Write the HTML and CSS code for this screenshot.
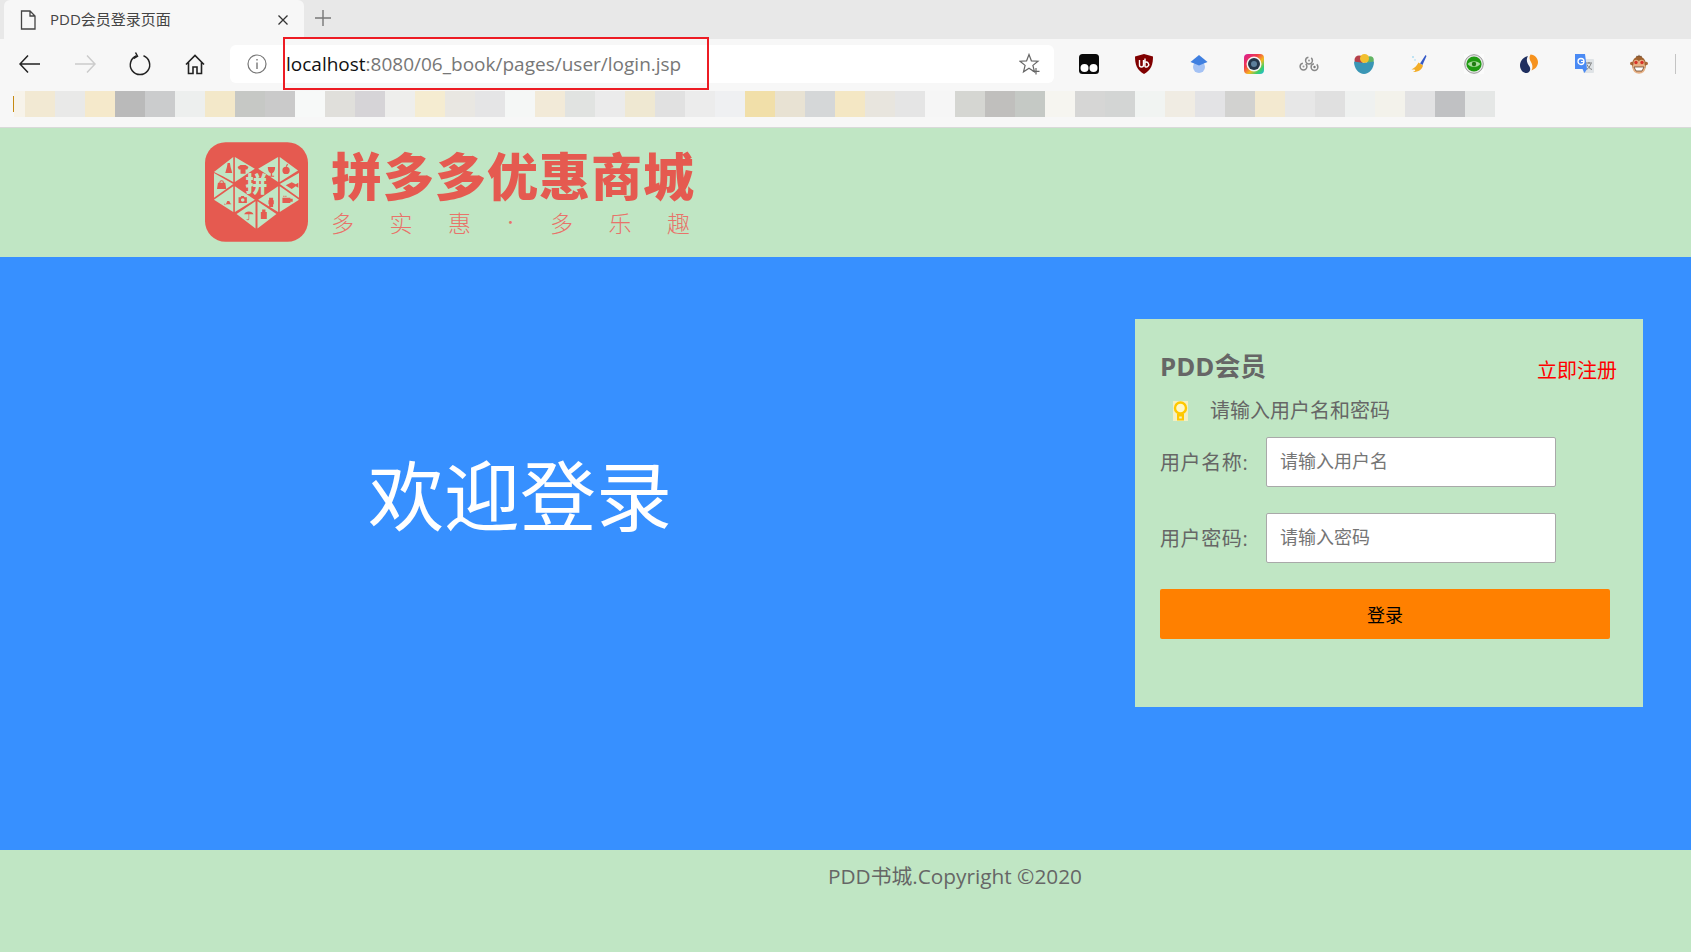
FILE: index.html
```html
<!DOCTYPE html>
<html lang="zh-CN">
<head>
<meta charset="utf-8">
<title>PDD会员登录页面</title>
<link rel="stylesheet" href="styles.css">
</head>
<body>
<div class="browser">
  <div class="tabstrip">
    <div class="tab">
      <svg class="tab-doc" viewBox="0 0 18 20" width="18" height="20"><path d="M2.5 1H11L16 6V19H2.5Z M11 1V6H16" fill="none" stroke="#444" stroke-width="1.3"/></svg>
      <span class="tab-title">PDD会员登录页面</span>
      <svg class="tab-close" viewBox="0 0 12 12" width="12" height="12"><path d="M1.5 1.5L10.5 10.5M10.5 1.5L1.5 10.5" stroke="#333" stroke-width="1.3"/></svg>
    </div>
    <svg class="tab-new" viewBox="0 0 18 18" width="18" height="18"><path d="M9 1V17M1 9H17" stroke="#777" stroke-width="1.4"/></svg>
  </div>
  <div class="toolbar">
    <div class="navrow">
      <div class="btn"><svg viewBox="0 0 22 20" width="22" height="20"><path d="M9 1.5L1 10L9 18.5M1 10H21" fill="none" stroke="#222" stroke-width="1.5"/></svg></div>
      <div class="btn"><svg viewBox="0 0 22 20" width="22" height="20"><path d="M13 1.5L21 10L13 18.5M21 10H1" fill="none" stroke="#ccc" stroke-width="1.5"/></svg></div>
      <div class="btn"><svg viewBox="0 0 24 24" width="24" height="24"><path d="M8.5 3.800A9.700 9.700 0 1 0 15.500 3.800" fill="none" stroke="#222" stroke-width="1.5"/><path d="M7.500 0.500L9.500 4.200L5.500 6.500" fill="none" stroke="#222" stroke-width="1.5"/></svg></div>
      <div class="btn"><svg viewBox="0 0 20 21" width="20" height="21"><path d="M1 10.500L10 1.500L19 10.500M3.500 8.500V19.500H8V13H12V19.500H16.500V8.500" fill="none" stroke="#222" stroke-width="1.6"/></svg></div>
      <div class="address">
        <svg class="info" viewBox="0 0 20 20" width="20" height="20"><circle cx="10" cy="10" r="9" fill="none" stroke="#777" stroke-width="1.2"/><path d="M10 8.500V15M10 5V6.600" stroke="#777" stroke-width="1.4"/></svg>
        <span class="url"><span class="url-host">localhost</span>:8080/06_book/pages/user/login.jsp</span>
        <svg class="star" viewBox="0 0 22 22" width="22" height="22"><path d="M10 1.500L12.400 7.800L19 8.200L13.900 12.400L15.500 18.800L10 15.200L4.500 18.800L6.100 12.400L1 8.200L7.600 7.800Z" fill="none" stroke="#666" stroke-width="1.2"/><path d="M17 15V21.500M13.800 18.300H20.500" stroke="#666" stroke-width="1.2"/></svg>
      </div>
      <div class="extensions">
        <div class="btn"><svg viewBox="0 0 20 20" width="20" height="20"><rect width="20" height="20" rx="3.500" fill="#0a0a0a"/><circle cx="5.500" cy="14" r="4" fill="#fff"/><circle cx="14.500" cy="14" r="4" fill="#fff"/></svg></div>
        <div class="btn"><svg viewBox="0 0 18 20" width="18" height="20"><path d="M9 0L18 2.500C18 11 16 16 9 20C2 16 0 11 0 2.500Z" fill="#800000"/><path d="M4.500 6V11A2 2 0 0 0 8.500 11V6M10 4.500V13M10 8.500A2.400 2.400 0 1 1 10 12.600" fill="none" stroke="#fff" stroke-width="1.4"/></svg></div>
        <div class="btn"><svg viewBox="0 0 18 20" width="18" height="20"><circle cx="9" cy="13" r="6" fill="#a4c2f4"/><path d="M9 1L17.500 8L9 11.500L0.500 8Z" fill="#3f7fe0"/></svg></div>
        <div class="btn"><svg viewBox="0 0 20 20" width="20" height="20"><defs><linearGradient id="ring" x1="0" y1="0" x2="1" y2="1"><stop offset="0" stop-color="#d81b9a"/><stop offset=".35" stop-color="#f03a4a"/><stop offset=".6" stop-color="#f5b81f"/><stop offset=".8" stop-color="#3ccf6a"/><stop offset="1" stop-color="#1fb6e8"/></linearGradient></defs><rect width="20" height="20" rx="4" fill="url(#ring)"/><circle cx="10" cy="10" r="7.500" fill="#f4f4f4"/><circle cx="10" cy="10" r="6" fill="#26364a"/><circle cx="10" cy="10" r="3" fill="#5d7f9c"/></svg></div>
        <div class="btn"><svg viewBox="0 0 20 16" width="20" height="16"><g fill="none" stroke="#888" stroke-width="1.5" stroke-dasharray="15 3"><circle cx="4.500" cy="10.500" r="3.400"/><circle cx="10" cy="4.500" r="3.400"/><circle cx="15.500" cy="11" r="3.400"/></g><circle cx="15.500" cy="11" r="1.200" fill="#777"/><circle cx="10" cy="4.500" r="1" fill="#999"/><circle cx="4.500" cy="10.500" r="1" fill="#999"/></svg></div>
        <div class="btn"><svg viewBox="0 0 20 20" width="20" height="20"><circle cx="5" cy="6" r="4.500" fill="#b5404a"/><circle cx="16" cy="6" r="3.800" fill="#62b463"/><circle cx="10.500" cy="4.500" r="4.500" fill="#f2bf2e"/><path d="M0 7.500L10 9L20 7.500C20 15 15 20 10 20C5 20 0 15 0 7.500Z" fill="#3a96b5"/></svg></div>
        <div class="btn"><svg viewBox="0 0 16 20" width="16" height="20"><rect x="1" y="2" width="2" height="2" fill="#bfe3f2"/><rect x="3" y="5" width="2" height="2" fill="#cfe9f5"/><path d="M14.500 1L9 9.500L11.500 11L15.500 2Z" fill="#3559c7"/><path d="M7.500 8.500L12 11.500C11 15.500 8 18 2 18C5 16.500 5.500 15 0.500 15.500C4 13.500 6 11.500 7.500 8.500Z" fill="#f3ad27"/></svg></div>
        <div class="btn"><svg viewBox="0 0 20 20" width="20" height="20"><rect width="20" height="20" fill="#fbfbfb"/><circle cx="10" cy="10" r="9.300" fill="#e6e6e6" stroke="#999" stroke-width="1"/><circle cx="10" cy="10" r="7.600" fill="#1f9a12"/><path d="M3.600 10C6.500 6.200 13.500 6.200 16.400 10C13.500 13.800 6.500 13.800 3.600 10Z" fill="#a8d99c"/><circle cx="10" cy="10" r="2.200" fill="#1f7a12"/></svg></div>
        <div class="btn"><svg viewBox="0 0 18 20" width="18" height="20"><path d="M8 2C2 3.500 0 8 0 11.500C0 16 3.500 19.500 7 19C10 18.500 11 15 9.500 12.500C7.500 9.500 5.500 6.500 8 2Z" fill="#1f2f5f"/><path d="M10.500 0.500C8.800 3 9.500 5.500 11 8C12.500 10.500 13 13.500 11.500 16.500C15.500 15 18 12 18 8C18 4.500 15 0.800 10.500 0.500Z" fill="#f6921e"/></svg></div>
        <div class="btn"><svg viewBox="0 0 20 20" width="20" height="20"><rect x="9" y="5" width="11" height="14" rx="1" fill="#dfe3e6"/><path d="M12 9H18M15 8V9.500M17 9.500C16 12.500 14.500 14.500 12.500 15.500M13 10.500C14 13 15.500 14.500 18 15.500" fill="none" stroke="#777" stroke-width=".9"/><path d="M1 0H11L13 15H1Z M8.500 15L10.500 19L13 15Z" fill="#4a8af4"/><circle cx="7" cy="7.500" r="3" fill="none" stroke="#fff" stroke-width="1.3"/><path d="M7 7.500H10" stroke="#fff" stroke-width="1.1"/></svg></div>
        <div class="btn"><svg viewBox="0 0 18 20" width="18" height="20"><path d="M6 3L7 1.500L8 2.500L9 0.500L10 2.500L11 1.500L12 3V5H6Z" fill="#6e4425"/><circle cx="1.800" cy="9.500" r="1.800" fill="#a86a3b"/><circle cx="16.200" cy="9.500" r="1.800" fill="#a86a3b"/><ellipse cx="9" cy="10.500" rx="7" ry="8" fill="#a0622f"/><ellipse cx="9" cy="13.500" rx="6.500" ry="6.200" fill="#e6b084"/><path d="M3.500 8.500A2.500 2.500 0 0 1 8.800 8.500A2.500 2.500 0 0 1 14.500 8.500V10H3.500Z" fill="#e6b084"/><circle cx="6" cy="8.500" r="1.700" fill="#d8342a"/><circle cx="12" cy="8.500" r="1.700" fill="#d8342a"/><path d="M4 13H14L12 17H6Z" fill="#fff" stroke="#5a3418" stroke-width=".7"/></svg></div>
        <span class="sep"></span>
      </div>
    </div>
    <div class="bookmarks">
      <span class="tick"></span><span class="tile-first"></span><span class="tile t01"></span><span class="tile t02"></span><span class="tile t03"></span><span class="tile t04"></span><span class="tile t05"></span><span class="tile t06"></span><span class="tile t07"></span><span class="tile t08"></span><span class="tile t09"></span><span class="tile t10"></span><span class="tile t11"></span><span class="tile t12"></span><span class="tile t13"></span><span class="tile t14"></span><span class="tile t15"></span><span class="tile t16"></span><span class="tile t17"></span><span class="tile t18"></span><span class="tile t19"></span><span class="tile t20"></span><span class="tile t21"></span><span class="tile t22"></span><span class="tile t23"></span><span class="tile t24"></span><span class="tile t25"></span><span class="tile t26"></span><span class="tile t27"></span><span class="tile t28"></span><span class="tile t29"></span><span class="tile t30"></span><span class="tile t31"></span><span class="tile t32"></span><span class="tile t33"></span><span class="tile t34"></span><span class="tile t35"></span><span class="tile t36"></span><span class="tile t37"></span><span class="tile t38"></span><span class="tile t39"></span><span class="tile t40"></span><span class="tile t41"></span><span class="tile t42"></span><span class="tile t43"></span><span class="tile t44"></span><span class="tile t45"></span><span class="tile t46"></span><span class="tile t47"></span><span class="tile t48"></span><span class="tile t49"></span>
    </div>
    <div class="annotation"></div>
  </div>
</div>

<header class="site-header">
  <svg class="logo" viewBox="15 5 310 300" width="103" height="100">
    <rect x="15" y="5" width="310" height="300" rx="62" fill="#e55a50"/>
    <g fill="#c0e6c4">
      <path d="M100 50V125L70 108L42 95Z"/>
      <path d="M105 50L165 85L105 125Z"/>
      <path d="M42 98L100 131L42 172Z"/>
      <path d="M42 178L100 138V215Z"/>
      <path d="M105 138L165 178L105 215Z"/>
      <path d="M110 221L167 183V265Z"/>
      <path d="M173 183L230 221L173 265Z"/>
      <path d="M175 178L235 138V215Z"/>
      <path d="M240 138L298 178L240 215Z"/>
      <path d="M240 131L298 98V172Z"/>
      <path d="M240 50L295 90L240 125Z"/>
      <path d="M235 50V125L175 85Z"/>
    </g>
    <text class="logo-mark" x="170" y="156" text-anchor="middle">拼</text>
    <g fill="#e55a50">
      <path d="M83 68H90L92 80L97 98H76L81 80Z"/>
      <path d="M113 80L122 74H137L146 80L142 87H137V100H122V87H117Z"/>
      <path d="M54 127H76L79 146H51ZM58 127A7 7 0 0 1 72 127H69A4 4 0 0 0 61 127Z"/>
      <path d="M73 192H78L82 182L88 182L92 190H76ZM72 190H94V192H80L74 194Z"/>
      <path d="M116 171H122L124 167H132L134 171H141V188H116ZM128.500 173.500A5.500 5.500 0 1 0 128.500 184.500A5.500 5.500 0 1 0 128.500 173.500Z" fill-rule="evenodd"/>
      <path d="M133 222A15 13 0 0 1 161 222ZM146 222H148V236A4 4 0 0 1 140 236H142A2 2 0 0 0 146 236Z"/>
      <path d="M183 215H201V236H183ZM187 208H197V215H187Z"/>
      <path d="M208 172H220V180H208ZM208 192H220V200H208ZM206 180H222V192H206Z"/>
      <path d="M248 172H272V188H248ZM272 175H279V184H272ZM251 166H254V170H251ZM257 166H260V170H257Z"/>
      <path d="M258 135L276 126L288 132L296 127V142L288 138L276 146Z"/>
      <path d="M248 90A11 11 0 0 1 270 90A11 11 0 0 1 248 90ZM258 78L262 70L265 72L261 79Z"/>
      <path d="M204 80H226C226 93 220 98 217 99V106H223V109H207V106H213V99C210 98 204 93 204 80Z"/>
    </g>
  </svg>
  <div class="brand">
    <div class="brand-name">拼多多优惠商城</div>
    <div class="brand-sub"><span>多</span><span>实</span><span>惠</span><span class="brand-dot">·</span><span>多</span><span>乐</span><span>趣</span></div>
  </div>
</header>

<main class="hero">
  <h1 class="welcome">欢迎登录</h1>
  <section class="card">
    <div class="card-head">
      <h2 class="card-title">PDD会员</h2>
      <a class="register" href="#">立即注册</a>
    </div>
    <div class="hint">
      <svg class="bulb" viewBox="0 0 15 20" width="15" height="20"><rect width="15" height="20" fill="#f3f0c4"/><circle cx="7.500" cy="7" r="5.500" fill="#fff7c8" stroke="#ffc800" stroke-width="2.400"/><path d="M4 13H11V19.500H4ZM6.200 15.500H8.800V17.500H6.200Z" fill="#ffc800" fill-rule="evenodd"/></svg>
      <span>请输入用户名和密码</span>
    </div>
    <form class="login-form">
      <label class="field"><span class="field-label">用户名称:</span><input class="field-input" type="text" placeholder="请输入用户名"></label>
      <label class="field"><span class="field-label">用户密码:</span><input class="field-input" type="password" placeholder="请输入密码"></label>
      <button class="submit" type="button">登录</button>
    </form>
  </section>
</main>

<footer class="site-footer">PDD书城.Copyright ©2020</footer>
</body>
</html>
```
FILE: styles.css
```css
* { box-sizing: border-box; }
html, body { margin: 0; padding: 0; }
body {
  width: 1691px;
  height: 952px;
  overflow: hidden;
  display: flex;
  flex-direction: column;
  font-family: "Open Sans", "Noto Sans CJK SC", sans-serif;
  background: #c0e6c4;
}

/* browser chrome */
.tabstrip {
  height: 39px;
  background: #e8e8e8;
  display: flex;
  align-items: flex-start;
  padding-left: 4px;
}
.tab {
  width: 300px;
  height: 39px;
  background: #f7f7f7;
  border-radius: 6px 6px 0 0;
  display: flex;
  align-items: center;
  padding-left: 15px;
}
.tab-doc { flex: none; }
.tab-title {
  margin: -3px 0 0 13px;
  width: 227px;
  font-size: 15px;
  color: #444;
  white-space: nowrap;
}
.tab-close { flex: none; }
.tab-new { margin: 9px 0 0 10px; }

.toolbar {
  position: relative;
  height: 89px;
  background: #f7f7f7;
  border-bottom: 1px solid #d9d9d9;
}
.navrow {
  height: 50px;
  display: flex;
  align-items: flex-start;
  padding-left: 2px;
}
.btn {
  width: 55px;
  height: 38px;
  margin-top: 6px;
  flex: none;
  display: flex;
  align-items: center;
  justify-content: center;
}
.address {
  flex: none;
  width: 824px;
  height: 38px;
  margin: 6px 7px 0 8px;
  background: #fff;
  border-radius: 6px;
  display: flex;
  align-items: center;
  padding-left: 17px;
}
.info { flex: none; }
.url {
  margin: -1px 0 0 19px;
  font-size: 19px;
  color: #777;
  white-space: nowrap;
  width: 733px;
}
.url-host { color: #111; }
.star { flex: none; }
.extensions { display: flex; align-items: flex-start; }
.sep {
  width: 1px;
  height: 20px;
  margin: 15px 0 0 9px;
  background: #c4c4c4;
}
.annotation {
  position: absolute;
  left: 283px;
  top: -2px;
  width: 426px;
  height: 53px;
  border: 2px solid #ed1c24;
}
.bookmarks {
  height: 26px;
  margin-top: 2px;
  display: flex;
  padding-left: 13px;
}
.tick { width: 1px; height: 16px; margin-top: 5px; background: #c68a12; }
.tile-first { width: 11px; background: #f7f3ea; }
.tile { width: 30px; flex: none; }
.t01 { background: #f2e9d3; } .t02 { background: #e9e9e8; } .t03 { background: #f5e9cb; }
.t04 { background: #bababa; } .t05 { background: #cbcccd; } .t06 { background: #edefee; }
.t07 { background: #f3e8c9; } .t08 { background: #c6c8c5; } .t09 { background: #cacaca; }
.t10 { background: #f7f9f8; } .t11 { background: #e0dfdb; } .t12 { background: #d6d4d7; }
.t13 { background: #eeeeec; } .t14 { background: #f5ecd1; } .t15 { background: #e9e7e2; }
.t16 { background: #e5e5e6; } .t17 { background: #f5f7f6; } .t18 { background: #f2ead8; }
.t19 { background: #e1e3e1; } .t20 { background: #ebebeb; } .t21 { background: #efe8d2; }
.t22 { background: #e1e1e1; } .t23 { background: #ececec; } .t24 { background: #eff0f2; }
.t25 { background: #f1dfa9; } .t26 { background: #e8e2d3; } .t27 { background: #d5d7d8; }
.t28 { background: #f4e7c4; } .t29 { background: #e8e5de; } .t30 { background: #e5e5e5; }
.t31 { background: #f6f6f6; } .t32 { background: #d5d6d2; } .t33 { background: #c0bfbd; }
.t34 { background: #c5c9c5; } .t35 { background: #f6f5f0; } .t36 { background: #d6d6d5; }
.t37 { background: #d3d5d4; } .t38 { background: #f1f4f2; } .t39 { background: #f0ece3; }
.t40 { background: #e3e3e5; } .t41 { background: #d2d2d0; } .t42 { background: #f3e9d0; }
.t43 { background: #e7e7e7; } .t44 { background: #e0e0e0; } .t45 { background: #eff1f0; }
.t46 { background: #f3f2eb; } .t47 { background: #e2e2e3; } .t48 { background: #c0c1c3; }
.t49 { background: #e5e7e6; }

/* site header */
.site-header {
  height: 129px;
  flex: none;
  background: #c0e6c4;
  display: flex;
  align-items: flex-start;
  padding: 14px 0 0 205px;
}
.logo { flex: none; }
.logo-mark {
  font-family: "Noto Sans CJK SC", sans-serif;
  font-size: 66px;
  font-weight: 900;
  fill: #c0e6c4;
}
.brand { margin-left: 23px; width: 365px; color: #e55a50; }
.brand-name {
  font-family: "Noto Sans CJK SC", sans-serif;
  font-size: 51px;
  font-weight: 900;
  line-height: 52px;
  letter-spacing: 1px;
  white-space: nowrap;
  margin-top: 6px;
}
.brand-sub {
  display: flex;
  gap: 35.5px;
  font-family: "Noto Sans CJK SC", sans-serif;
  font-size: 23px;
  font-weight: 300;
  line-height: 28px;
  margin-top: 8px;
  color: #e8736a;
}
.brand-dot {
  width: 8px;
  display: flex;
  justify-content: center;
  font-size: 15px;
}

/* hero */
.hero {
  height: 593px;
  flex: none;
  background: #3790ff;
  display: flex;
  align-items: flex-start;
}
.welcome {
  margin: 189px 0 0 368px;
  font-size: 76px;
  line-height: 100px;
  font-weight: 400;
  color: #fff;
  white-space: nowrap;
}
.card {
  width: 508px;
  height: 388px;
  margin: 62px 48px 0 auto;
  padding: 30px 26px 0 25px;
  background: #c0e6c4;
  color: #666;
}
.card-head {
  height: 36px;
  display: flex;
  justify-content: space-between;
  align-items: flex-end;
}
.card-title {
  margin: -1px 0 1px;
  font-size: 25.8px;
  font-weight: 700;
  line-height: 36px;
}
.register {
  font-size: 20px;
  line-height: 30px;
  margin-bottom: -1px;
  color: #f00;
  text-decoration: none;
}
.hint {
  height: 30px;
  margin: 11px 0 11px 13px;
  display: flex;
  align-items: center;
  gap: 22px;
  font-size: 20px;
  line-height: 30px;
}
.bulb { flex: none; margin-top: -1px; }
.login-form {
  display: flex;
  flex-direction: column;
  gap: 26px;
}
.field { display: flex; align-items: center; height: 50px; }
.field-label {
  width: 106px;
  flex: none;
  margin-top: -2px;
  font-size: 20px;
  letter-spacing: .6px;
}
.field-input {
  width: 290px;
  height: 50px;
  padding: 0 13px 2px;
  border: 1px solid #a9a9a9;
  border-radius: 2px;
  background: #fff;
  font-family: inherit;
  font-size: 18px;
  outline: none;
}
.field-input::placeholder { color: #757575; opacity: 1; }
.submit {
  width: 450px;
  height: 50px;
  border: 0;
  border-radius: 2px;
  background: #ff8000;
  color: #000;
  font-family: inherit;
  font-size: 18px;
  padding: 0;
}

/* footer */
.site-footer {
  flex: 1;
  background: #c0e6c4;
  padding: 11px 0 0 828px;
  font-size: 20.8px;
  line-height: 30px;
  color: #666;
}
```
